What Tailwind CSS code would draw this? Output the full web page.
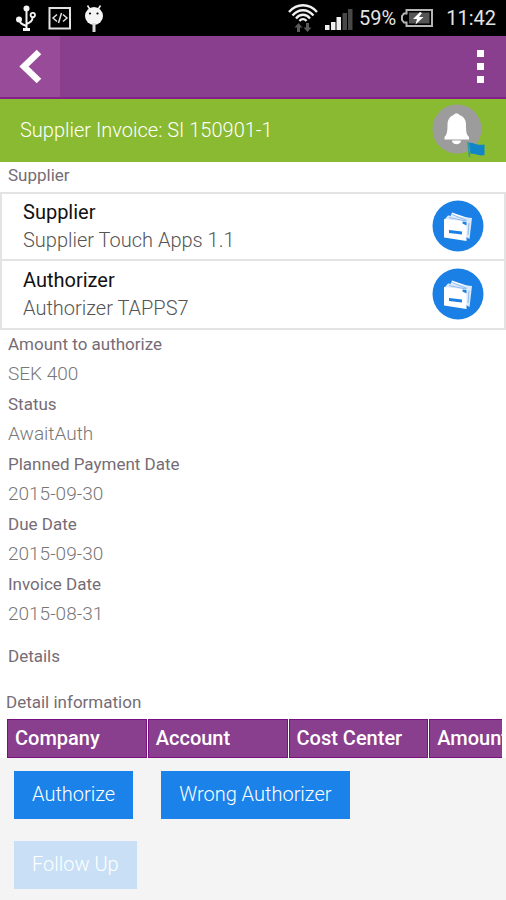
<!DOCTYPE html>
<html lang="en">
<head>
<meta charset="utf-8">
<meta name="viewport" content="width=device-width, initial-scale=1">
<title>Supplier Invoice</title>
<script src="https://cdn.jsdelivr.net/npm/@tailwindcss/browser@4"></script>
</head>
<body class="flex min-h-screen flex-col overflow-x-hidden bg-white font-['Roboto',sans-serif] text-[17px]">

<div class="flex h-9 shrink-0 items-center justify-between bg-black pr-[10px] pl-4 text-[#e4e4e4]">
  <div class="flex items-center gap-3">
    <svg class="h-7 w-5" viewBox="0 0 20 28" fill="none" stroke="#f4f4f4" stroke-width="2" aria-hidden="true">
      <path d="M10.500 5v21M10.500 22C6 20.500 3 19 3 15M10.500 20c4-1.500 6-3 6-6"/>
      <path d="M7 25.500h7" stroke-width="3"/>
      <circle cx="10.500" cy="4.500" r="3" fill="#f4f4f4" stroke="none"/>
      <circle cx="3" cy="15.500" r="3" fill="#f4f4f4" stroke="none"/>
      <circle cx="16.800" cy="11" r="2.200" stroke-width="1.800"/>
    </svg>
    <svg class="h-6 w-6" viewBox="0 0 24 24" fill="none" stroke="#e2e2e2" aria-hidden="true">
      <rect x="1.500" y="2" width="20.500" height="20.500" stroke-width="2"/>
      <path d="M9 8.500l-4 3.500 4 3.500M15 8.500l4 3.500-4 3.500M13.500 7l-3 10" stroke-width="1.500"/>
    </svg>
    <svg class="h-7 w-5" viewBox="0 0 20 28" aria-hidden="true">
      <path d="M3.500 1.500l2.500 4M16.500 1.500l-2.500 4" stroke="#f4f4f4" stroke-width="1.500"/>
      <circle cx="10" cy="12" r="9" fill="#f4f4f4"/>
      <path d="M10 19v9" stroke="#dcdcdc" stroke-width="3"/>
      <circle cx="6" cy="9.500" r="1.100"/><circle cx="13.500" cy="9.500" r="1.100"/>
    </svg>
  </div>
  <div class="flex items-center">
    <svg class="h-8 w-8" viewBox="0 0 32 32" fill="none" stroke="#f0f0f0" stroke-width="2.300" aria-hidden="true">
      <path d="M2 10C10 1 22 1 30 10M5.500 13.500c6-7 15-7 21 0M9 16.500c4-5 10-5 14 0M12.500 19c2-2.500 5-2.500 7 0"/>
      <path d="M11.500 21l4 4.500H13V30h-3v-4.500H7.500zM20.500 30l4-4.500H22V21h-3v4.500h-2.500z" fill="#5a5a5a" stroke="none"/>
    </svg>
    <svg class="ml-1 h-7 w-8" viewBox="0 0 32 28" aria-hidden="true">
      <path d="M2 21h4.500v5H2zM8 18h4.500v8H8zM13.500 13H18v13h-4.500z" fill="#f0f0f0"/>
      <path d="M19.500 9H24v17h-4.500zM25 5h4.500v21H25z" fill="#484848"/>
    </svg>
    <span class="ml-1 text-xl">59%</span>
    <svg class="ml-1 h-5 w-[34px]" viewBox="0 0 34 20" aria-hidden="true">
      <path d="M6.500 2H32v16H6.500v-3.500H4L2 12V8l2-2.500h2.500z" fill="none" stroke="#b5b5b5" stroke-width="2"/>
      <path d="M9 4.500h20.500v11H9z" fill="#555"/>
      <path d="M20 4l-7 7h4l-1.500 5.500 8-7.500h-4.500l3-4z" fill="#fff"/>
    </svg>
    <span class="ml-3 text-xl">11:42</span>
  </div>
</div>

<header class="flex h-[63px] shrink-0 items-stretch justify-between border-b-2 border-[#83208a] bg-[#893f8e]">
  <button type="button" aria-label="Back" class="flex w-[60px] items-center justify-center bg-[#984b99]">
    <svg class="h-9 w-6" viewBox="0 0 24 36" fill="none" stroke="#fff" stroke-width="6.500" aria-hidden="true"><path d="M21 3L6 17.500 21 32"/></svg>
  </button>
  <button type="button" aria-label="More options" class="flex w-[52px] flex-col items-center justify-center gap-[6px]">
    <span class="size-[7px] bg-white"></span>
    <span class="size-[7px] bg-white"></span>
    <span class="size-[7px] bg-white"></span>
  </button>
</header>

<div class="flex h-[63px] shrink-0 items-center justify-between bg-[#8aba32] px-5 pb-px">
  <h1 class="text-xl font-light text-white">Supplier Invoice: SI 150901-1</h1>
  <button type="button" aria-label="Notifications">
    <svg class="h-[54px] w-[54px]" viewBox="0 0 54 54" aria-hidden="true">
      <circle cx="25" cy="26" r="24.500" fill="#9c9c9c"/>
      <path d="M24.500 10.500c1.500 0 2.500.7 3 1.500 4.500 1.500 6.500 5 6.500 9.500 0 7 .3 10 3 12.500v2.500H12.500V34c2.500-2.500 3-5.500 3-12.500 0-4.500 2-8 6-9.500.5-.8 1.500-1.500 3-1.500z" fill="#fff"/>
      <path d="M20 37.500h9c0 5-9 5-9 0z" fill="#fff"/>
      <path d="M36 39l1.500 15" stroke="#2c9c9c" stroke-width="1.500"/>
      <path d="M37 40c5-1 6 3 15.500 1.500V52c-7 1.500-9-2-14-1z" fill="#1085c8"/>
    </svg>
  </button>
</div>

<main class="flex-1">
  <h2 class="h-[30px] px-2 leading-[26px] text-[#766c76]">Supplier</h2>

  <ul class="divide-y-2 divide-[#e3e3e3] border-2 border-[#e3e3e3]">
    <li class="flex h-[67px] items-center justify-between pr-5 pb-[2px] pl-[21px]">
      <div>
        <p class="text-xl leading-7 text-[#111]">Supplier</p>
        <p class="text-xl leading-7 font-light text-[#555]">Supplier Touch Apps 1.1</p>
      </div>
      <button type="button" aria-label="Open supplier">
        <svg class="size-[52px]" viewBox="0 0 52 52" aria-hidden="true">
          <circle cx="26" cy="26" r="25.500" fill="#1a80e5"/>
          <path d="M18.500 17l1.500-4.500L39 19l-2 8z" fill="#fff"/>
          <path d="M13 19l3-3.500L40 18l-2.500 21-5-3z" fill="#dce9fa"/>
          <path d="M12 19l22.500 2.500V41L12 37.500z" fill="#fff"/>
          <path d="M17 17.500l17 3.500M20 14.500l15 6M37 23l-1 12" stroke="#8dbcf2" stroke-width="1"/>
          <path d="M30.500 21.500l4 .5v3.500l-4-2z" fill="#1a80e5"/>
          <path d="M17 30l13 1.500v3L17 33z" fill="#1a80e5"/>
        </svg>
      </button>
    </li>
    <li class="flex h-[67px] items-center justify-between pr-5 pb-[2px] pl-[21px]">
      <div>
        <p class="text-xl leading-7 text-[#111]">Authorizer</p>
        <p class="text-xl leading-7 font-light text-[#555]">Authorizer TAPPS7</p>
      </div>
      <button type="button" aria-label="Open authorizer">
        <svg class="size-[52px]" viewBox="0 0 52 52" aria-hidden="true">
          <circle cx="26" cy="26" r="25.500" fill="#1a80e5"/>
          <path d="M18.500 17l1.500-4.500L39 19l-2 8z" fill="#fff"/>
          <path d="M13 19l3-3.500L40 18l-2.500 21-5-3z" fill="#dce9fa"/>
          <path d="M12 19l22.500 2.500V41L12 37.500z" fill="#fff"/>
          <path d="M17 17.500l17 3.500M20 14.500l15 6M37 23l-1 12" stroke="#8dbcf2" stroke-width="1"/>
          <path d="M30.500 21.500l4 .5v3.500l-4-2z" fill="#1a80e5"/>
          <path d="M17 30l13 1.500v3L17 33z" fill="#1a80e5"/>
        </svg>
      </button>
    </li>
  </ul>

  <dl class="px-2">
    <dt class="leading-7 text-[#766c76]">Amount to authorize</dt>
    <dd class="text-[19px] leading-8 font-light text-[#777]">SEK 400</dd>
    <dt class="leading-7 text-[#766c76]">Status</dt>
    <dd class="text-[19px] leading-8 font-light text-[#777]">AwaitAuth</dd>
    <dt class="leading-7 text-[#766c76]">Planned Payment Date</dt>
    <dd class="text-[19px] leading-8 font-light text-[#777]">2015-09-30</dd>
    <dt class="leading-7 text-[#766c76]">Due Date</dt>
    <dd class="text-[19px] leading-8 font-light text-[#777]">2015-09-30</dd>
    <dt class="leading-7 text-[#766c76]">Invoice Date</dt>
    <dd class="text-[19px] leading-8 font-light text-[#777]">2015-08-31</dd>
  </dl>

  <h2 class="mt-3 px-2 leading-7 text-[#766c76]">Details</h2>

  <div class="mt-[18px] mr-1 ml-[6px] overflow-hidden">
    <table class="w-[564px] table-fixed border-separate border-spacing-x-px border-spacing-y-0 text-left">
      <caption class="pb-[3px] text-left leading-7 text-[#766c76]">Detail information</caption>
      <thead>
        <tr class="h-[39px] text-xl text-white">
          <th scope="col" class="border border-[#781080] bg-[#893f8e] px-[7px] pt-0 pb-[2px] font-medium">Company</th>
          <th scope="col" class="border border-[#781080] bg-[#893f8e] px-[7px] pt-0 pb-[2px] font-medium">Account</th>
          <th scope="col" class="border border-[#781080] bg-[#893f8e] px-[7px] pt-0 pb-[2px] font-medium">Cost Center</th>
          <th scope="col" class="border border-[#781080] bg-[#893f8e] px-[7px] pt-0 pb-[2px] font-medium">Amount</th>
        </tr>
      </thead>
    </table>
  </div>
</main>

<footer class="flex shrink-0 flex-wrap gap-x-7 gap-y-[22px] bg-[#f4f4f4] px-[14px] pt-[13px] pb-[11px] text-xl font-light text-white">
  <button type="button" class="h-12 bg-[#1a82e8] px-[18px] pb-[2px]">Authorize</button>
  <button type="button" class="h-12 bg-[#1a82e8] px-[18px] pb-[2px]">Wrong Authorizer</button>
  <div class="w-full">
    <button type="button" disabled class="h-12 bg-[#c8dff6] px-[18px] pb-[2px]">Follow Up</button>
  </div>
</footer>
</body>
</html>
